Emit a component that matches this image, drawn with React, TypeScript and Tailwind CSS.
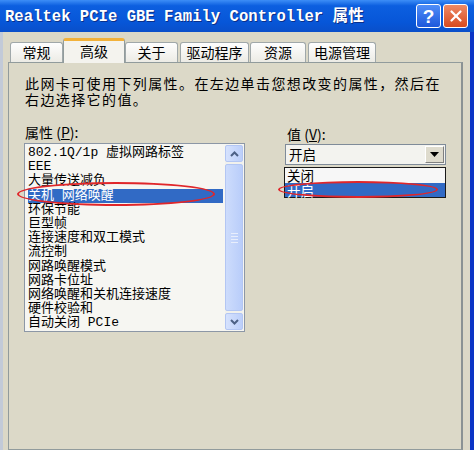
import { X } from "lucide-react";

const CJK = "font-['Noto_Sans_CJK_SC',sans-serif]";
const MONO = "font-['Liberation_Mono','Noto_Sans_CJK_SC',monospace]";

const tabs = [
  { label: "常规", w: "w-[53px]" },
  { label: "高级", w: "w-[62px]", active: true },
  { label: "关于", w: "w-[53px] mr-[2px]" },
  { label: "驱动程序", w: "w-[69px] mr-[1px]" },
  { label: "资源", w: "w-[56px] mr-[2px]" },
  { label: "电源管理", w: "w-[68px]" },
];

const items = [
  "802.1Q/1p 虚拟网路标签",
  "EEE",
  "大量传送减负",
  "关机 网络唤醒",
  "环保节能",
  "巨型帧",
  "连接速度和双工模式",
  "流控制",
  "网路唤醒模式",
  "网路卡位址",
  "网络唤醒和关机连接速度",
  "硬件校验和",
  "自动关闭 PCIe",
];

const Chevron = ({ up }: { up?: boolean }) => (
  <svg width="9" height="6" viewBox="0 0 9 6">
    <path
      d={up ? "M1 5 L4.5 1.5 L8 5" : "M1 1 L4.5 4.5 L8 1"}
      fill="none"
      stroke="#4d6185"
      strokeWidth="2"
    />
  </svg>
);

const App = () => {
  return (
    <div className="relative w-[474px] h-[450px] overflow-hidden flex flex-col bg-[#dbd8c7]">
      {/* title bar */}
      <div className="h-[32px] shrink-0 flex items-center pl-[5px] pr-[6px] bg-[linear-gradient(180deg,#3d8ef7_0%,#0c5fe0_18%,#0756d8_70%,#0a4fc9_100%)]">
        <div className={`${MONO} flex-1 text-white font-bold text-[15.6px] leading-none [text-shadow:1px_1px_0_#0a2f8a] whitespace-nowrap`}>
          Realtek PCIe GBE Family Controller <span className={CJK}>属性</span>
        </div>
        <div className="flex gap-[2px]">
          <div className="w-[25px] h-[24px] rounded-[3px] border border-white bg-[linear-gradient(180deg,#4f8ef8,#1d58db)] flex items-center justify-center text-white font-bold text-[19px] leading-none font-['Liberation_Sans',sans-serif]">
            ?
          </div>
          <div className="w-[25px] h-[24px] rounded-[3px] border border-white bg-[linear-gradient(180deg,#ee8a66,#d64a1f)] flex items-center justify-center">
            <X size={18} strokeWidth={3} color="#fff" />
          </div>
        </div>
      </div>

      {/* body */}
      <div className="flex-1 flex flex-col border-l-[3px] border-l-[#c2cad8] border-r-[4px] border-r-[#0b34c6] pt-[6px] pl-[5px] pr-[7px]">
        {/* tabs */}
        <div className={`${CJK} h-[24px] flex items-end pl-[2px] text-[14px] text-black`}>
          {tabs.map((t) =>
            t.active ? (
              <div
                key={t.label}
                className={`${t.w} relative z-10 h-[25px] -mb-[1px] border border-b-0 border-[#919b9c] border-t-[3px] border-t-[#f2b13a] rounded-t-[3px] bg-[#f4f3ee] flex justify-center pt-[1px] leading-[18px]`}
              >
                {t.label}
              </div>
            ) : (
              <div
                key={t.label}
                className={`${t.w} h-[20px] border border-b-0 border-[#a0a8aa] rounded-t-[3px] bg-[linear-gradient(180deg,#fefefe,#ecebe5)] flex justify-center leading-[19px]`}
              >
                {t.label}
              </div>
            )
          )}
        </div>

        {/* panel */}
        <div className="flex-1 border border-[#919b9c] border-r-[2px] border-r-[#8a9294] bg-[#dcd9c8] pt-[12px] pl-[15px]">
          <p className={`${CJK} pl-[1px] text-[14px] leading-[16px] tracking-[1.4px] text-black whitespace-nowrap`}>
            此网卡可使用下列属性。在左边单击您想改变的属性，然后在
            <br />
            右边选择它的值。
          </p>

          <div className="mt-[17px] flex gap-[40px]">
            {/* left column */}
            <div className="w-[221px] flex flex-col">
              <div className={`${CJK} pl-[1px] h-[16px] text-[14px] leading-[16px]`}>
                属性 (<span className="underline">P</span>):
              </div>
              <div className="mt-[3px] h-[189px] border border-[#8c97a6] bg-[#f6f6f2] flex">
                <div className={`${MONO} flex-1 pt-[2px] pl-[3px] pr-[2px] text-[13px] text-black`}>
                  {items.map((it, i) => (
                    <div
                      key={it}
                      className={`h-[14.2px] leading-[14.2px] whitespace-nowrap ${
                        i === 3 ? "bg-[#316ac5] text-white" : ""
                      }`}
                    >
                      {it}
                    </div>
                  ))}
                </div>
                <div className="w-[18px] mr-[1px] my-[1px] flex flex-col gap-[1px] bg-[#f1f1ec]">
                  <div className="h-[17px] rounded-[2px] border border-[#b3c6f3] bg-[linear-gradient(90deg,#d6e2fd,#bccffa)] flex items-center justify-center">
                    <Chevron up />
                  </div>
                  <div className="flex-1 my-[1px] rounded-[2px] border border-[#b3c6f3] bg-[linear-gradient(90deg,#cddcfc,#b9cdfa)] flex flex-col items-center justify-center gap-[2px]">
                    <div className="w-[7px] h-[1px] bg-[#e8eefc]" />
                    <div className="w-[7px] h-[1px] bg-[#e8eefc]" />
                    <div className="w-[7px] h-[1px] bg-[#e8eefc]" />
                    <div className="w-[7px] h-[1px] bg-[#e8eefc]" />
                  </div>
                  <div className="h-[17px] rounded-[2px] border border-[#b3c6f3] bg-[linear-gradient(90deg,#d6e2fd,#bccffa)] flex items-center justify-center">
                    <Chevron />
                  </div>
                </div>
              </div>
            </div>

            {/* right column */}
            <div className="w-[161px] flex flex-col">
              <div className={`${CJK} pl-[2px] mt-[2px] h-[16px] text-[14px] leading-[16px]`}>
                值 (<span className="underline">V</span>):
              </div>
              <div className="mt-[2px] h-[21px] border border-[#7f8b99] bg-[#f3f3ef] flex items-center">
                <div className={`${CJK} flex-1 pl-[3px] text-[13.5px] leading-none`}>开启</div>
                <div className="w-[19px] h-[17px] mr-[1px] border border-[#fff] border-r-[#808080] border-b-[#808080] bg-[#dedbcd] flex items-center justify-center">
                  <svg width="9" height="5" viewBox="0 0 9 5">
                    <path d="M0 0 H9 L4.5 5 Z" fill="#000" />
                  </svg>
                </div>
              </div>
              <div className={`${CJK} mt-[2px] -ml-[1px] w-[162px] border border-[#1a1a1a] text-[13.5px]`}>
                <div className="h-[14.5px] leading-[14.5px] pl-[2px] bg-[#f7f7f7] text-black">关闭</div>
                <div className="h-[14.5px] leading-[14.5px] pl-[2px] bg-[#316ac5] text-white">开启</div>
              </div>
            </div>
          </div>
        </div>
      </div>

      {/* red annotation ellipses */}
      <div className="absolute left-[17px] top-[182px] w-[198px] h-[24px] rounded-[50%] border-2 border-[#e0262a]" />
      <div className="absolute left-[278px] top-[181px] w-[160px] h-[17px] rounded-[50%] border-2 border-[#e0262a]" />
    </div>
  );
};

export default App;
